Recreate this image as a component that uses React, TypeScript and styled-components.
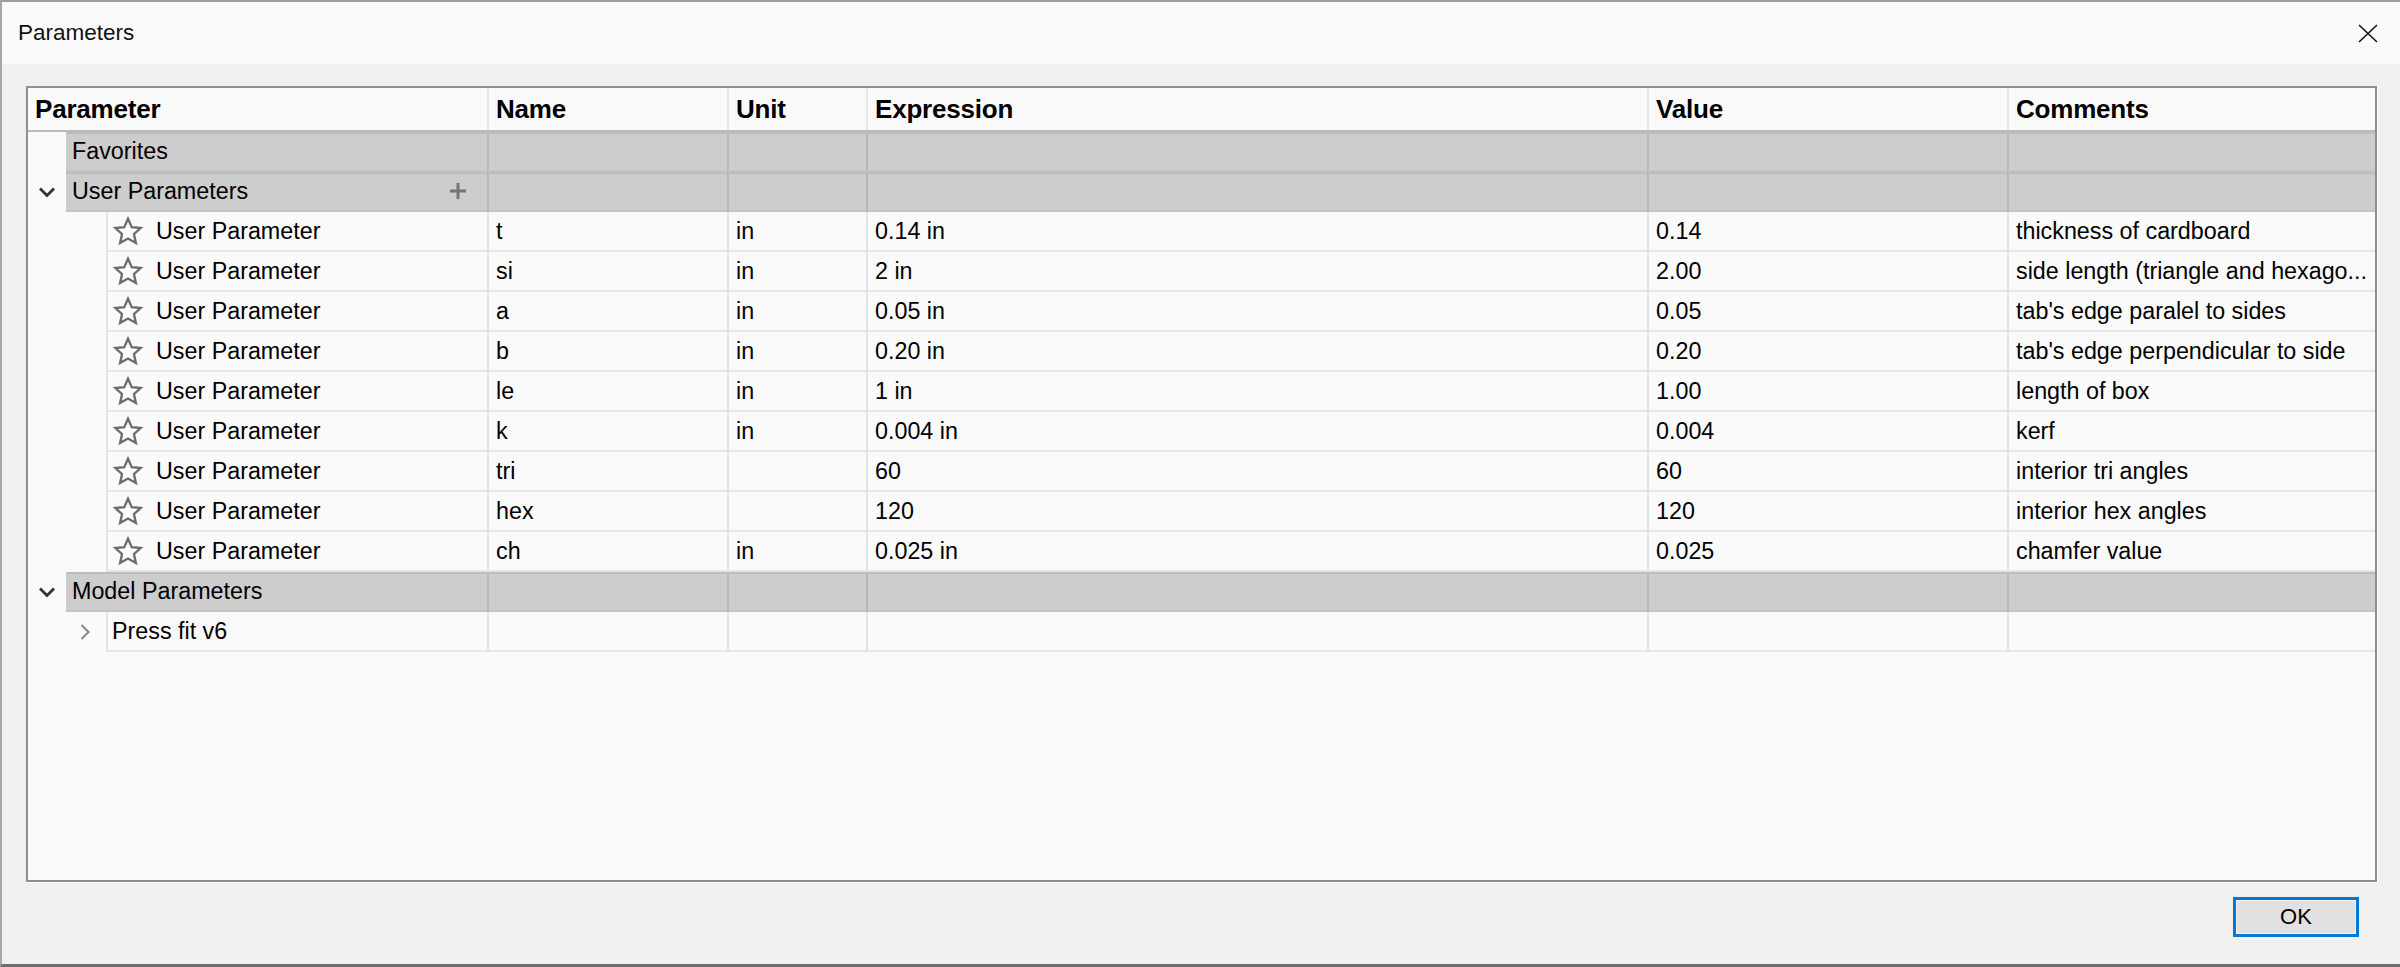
import React from 'react';
import styled, { createGlobalStyle } from 'styled-components';

const COLUMNS = '459px 240px 139px 781px 360px 1fr';

const GlobalStyle = createGlobalStyle`
  html, body {
    margin: 0;
    padding: 0;
    background: #f0f0f0;
    overflow: hidden;
  }
  * {
    box-sizing: border-box;
  }
`;

const Window = styled.div`
  width: 2400px;
  height: 967px;
  display: flex;
  flex-direction: column;
  border-left: 2px solid #a6a6a6;
  border-top: 2px solid #9c9c9c;
  border-bottom: 3px solid #6e6e6e;
  font-family: 'Liberation Sans', Arial, sans-serif;
  color: #000;
`;

const TitleBar = styled.div`
  height: 62px;
  flex-shrink: 0;
  display: flex;
  align-items: center;
  justify-content: space-between;
  background: #fafafa;
  padding-left: 16px;
  padding-right: 20px;
`;

const Title = styled.div`
  font-size: 22.5px;
  color: #111;
`;

const CloseButton = styled.div`
  width: 24px;
  height: 24px;
  display: flex;
  align-items: center;
  justify-content: center;
`;

const Body = styled.div`
  flex: 1;
  display: flex;
  flex-direction: column;
  background: #f0f0f0;
  padding: 22px 23px 0 24px;
`;

const Panel = styled.div`
  height: 796px;
  flex-shrink: 0;
  border: 2px solid #8e8e8e;
  box-shadow: 1px 1px 0 #ffffff;
  background: #fafafa;
  overflow: hidden;
`;

const Row = styled.div<{ $height?: number }>`
  display: grid;
  grid-template-columns: ${COLUMNS};
  height: ${(p) => p.$height ?? 40}px;
  font-size: 23.3px;
`;

const HeaderRow = styled(Row)`
  border-bottom: 2px solid #b9b9b9;
`;

const HeaderCell = styled.div<{ $first?: boolean }>`
  display: flex;
  align-items: center;
  padding-left: 7px;
  font-weight: bold;
  font-size: 26px;
  letter-spacing: -0.2px;
  border-left: ${(p) => (p.$first ? 'none' : '2px solid #e6e6e6')};
  white-space: nowrap;
`;

const Cell = styled.div<{ $group?: boolean }>`
  display: flex;
  align-items: center;
  padding-left: 7px;
  white-space: nowrap;
  overflow: hidden;
  background: ${(p) => (p.$group ? '#cdcdcd' : 'transparent')};
  border-left: 2px solid ${(p) => (p.$group ? '#b8b8b8' : '#e3e3e3')};
  border-bottom: 2px solid ${(p) => (p.$group ? '#c4c4c4' : '#e6e6e6')};
  box-shadow: ${(p) => (p.$group ? 'inset 0 2px 0 #bdbdbd' : 'none')};
`;

const FirstCell = styled.div`
  display: flex;
  min-width: 0;
`;

const Gutter = styled.div<{ $width: number }>`
  width: ${(p) => p.$width}px;
  flex-shrink: 0;
  display: flex;
  align-items: center;
  justify-content: center;
`;

const PressGutter = styled(Gutter)`
  justify-content: flex-end;
  padding-right: 15px;
`;

const Band = styled.div`
  flex: 1;
  display: flex;
  align-items: center;
  justify-content: space-between;
  padding: 0 20px 0 6px;
  background: #cdcdcd;
  border-bottom: 2px solid #c4c4c4;
  box-shadow: inset 0 2px 0 #bdbdbd;
  white-space: nowrap;
`;

const TreeItem = styled.div<{ $pad: number }>`
  flex: 1;
  display: flex;
  align-items: center;
  gap: 12px;
  padding-left: ${(p) => p.$pad}px;
  border-left: 2px solid #e3e3e3;
  border-bottom: 2px solid #e6e6e6;
  white-space: nowrap;
`;

const Footer = styled.div`
  flex: 1;
  display: flex;
  justify-content: flex-end;
  align-items: flex-start;
  padding-top: 15px;
  padding-right: 18px;
`;

const OkButton = styled.div`
  width: 126px;
  height: 40px;
  display: flex;
  align-items: center;
  justify-content: center;
  background: #e1e1e1;
  border: 3px solid #0078d7;
  box-shadow: inset 0 0 0 1px #f4f4f4;
  font-size: 22px;
  color: #000;
`;

const StarIcon = () => (
  <svg width="32" height="31" viewBox="0 0 24 24" style={{ flexShrink: 0 }}>
    <polygon
      points="12,2.2 14.9,8.6 21.8,9.3 16.6,14 18.1,20.9 12,17.4 5.9,20.9 7.4,14 2.2,9.3 9.1,8.6"
      fill="none"
      stroke="#6c6c6c"
      strokeWidth="1.8"
      strokeLinejoin="miter"
    />
  </svg>
);

const ChevronDown = () => (
  <svg width="18" height="12" viewBox="0 0 18 12">
    <path d="M2 2.5 L9 9.5 L16 2.5" fill="none" stroke="#333" strokeWidth="2.8" />
  </svg>
);

const ChevronRight = () => (
  <svg width="12" height="18" viewBox="0 0 12 18">
    <path d="M2.5 2 L9.5 9 L2.5 16" fill="none" stroke="#8e8e8e" strokeWidth="2.2" />
  </svg>
);

const PlusIcon = () => (
  <svg width="18" height="18" viewBox="0 0 18 18">
    <path d="M9 1 V17 M1 9 H17" stroke="#757575" strokeWidth="3" />
  </svg>
);

const CloseIcon = () => (
  <svg width="20" height="19" viewBox="0 0 20 19">
    <path d="M1 1 L19 18 M19 1 L1 18" stroke="#111" strokeWidth="1.6" />
  </svg>
);

type Param = {
  name: string;
  unit: string;
  expression: string;
  value: string;
  comment: string;
};

const PARAMS: Param[] = [
  { name: 't', unit: 'in', expression: '0.14 in', value: '0.14', comment: 'thickness of cardboard' },
  { name: 'si', unit: 'in', expression: '2 in', value: '2.00', comment: 'side length (triangle and hexago...' },
  { name: 'a', unit: 'in', expression: '0.05 in', value: '0.05', comment: 'tab\'s edge paralel to sides' },
  { name: 'b', unit: 'in', expression: '0.20 in', value: '0.20', comment: 'tab\'s edge perpendicular to side' },
  { name: 'le', unit: 'in', expression: '1 in', value: '1.00', comment: 'length of box' },
  { name: 'k', unit: 'in', expression: '0.004 in', value: '0.004', comment: 'kerf' },
  { name: 'tri', unit: '', expression: '60', value: '60', comment: 'interior tri angles' },
  { name: 'hex', unit: '', expression: '120', value: '120', comment: 'interior hex angles' },
  { name: 'ch', unit: 'in', expression: '0.025 in', value: '0.025', comment: 'chamfer value' },
];

const GroupRow = ({
  label,
  expanded,
  addable,
}: {
  label: string;
  expanded?: boolean;
  addable?: boolean;
}) => (
  <Row>
    <FirstCell>
      <Gutter $width={38}>{expanded && <ChevronDown />}</Gutter>
      <Band>
        <span>{label}</span>
        {addable && <PlusIcon />}
      </Band>
    </FirstCell>
    <Cell $group />
    <Cell $group />
    <Cell $group />
    <Cell $group />
    <Cell $group />
  </Row>
);

const App = () => {
  return (
    <>
      <GlobalStyle />
      <Window>
        <TitleBar>
          <Title>Parameters</Title>
          <CloseButton>
            <CloseIcon />
          </CloseButton>
        </TitleBar>
        <Body>
          <Panel>
            <HeaderRow $height={44}>
              <HeaderCell $first>Parameter</HeaderCell>
              <HeaderCell>Name</HeaderCell>
              <HeaderCell>Unit</HeaderCell>
              <HeaderCell>Expression</HeaderCell>
              <HeaderCell>Value</HeaderCell>
              <HeaderCell>Comments</HeaderCell>
            </HeaderRow>

            <GroupRow label="Favorites" />
            <GroupRow label="User Parameters" expanded addable />

            {PARAMS.map((p) => (
              <Row key={p.name}>
                <FirstCell>
                  <Gutter $width={78} />
                  <TreeItem $pad={4}>
                    <StarIcon />
                    <span>User Parameter</span>
                  </TreeItem>
                </FirstCell>
                <Cell>{p.name}</Cell>
                <Cell>{p.unit}</Cell>
                <Cell>{p.expression}</Cell>
                <Cell>{p.value}</Cell>
                <Cell>{p.comment}</Cell>
              </Row>
            ))}

            <GroupRow label="Model Parameters" expanded />

            <Row>
              <FirstCell>
                <PressGutter $width={78}>
                  <ChevronRight />
                </PressGutter>
                <TreeItem $pad={4}>
                  <span>Press fit v6</span>
                </TreeItem>
              </FirstCell>
              <Cell />
              <Cell />
              <Cell />
              <Cell />
              <Cell />
            </Row>
          </Panel>
          <Footer>
            <OkButton>OK</OkButton>
          </Footer>
        </Body>
      </Window>
    </>
  );
};

export default App;
